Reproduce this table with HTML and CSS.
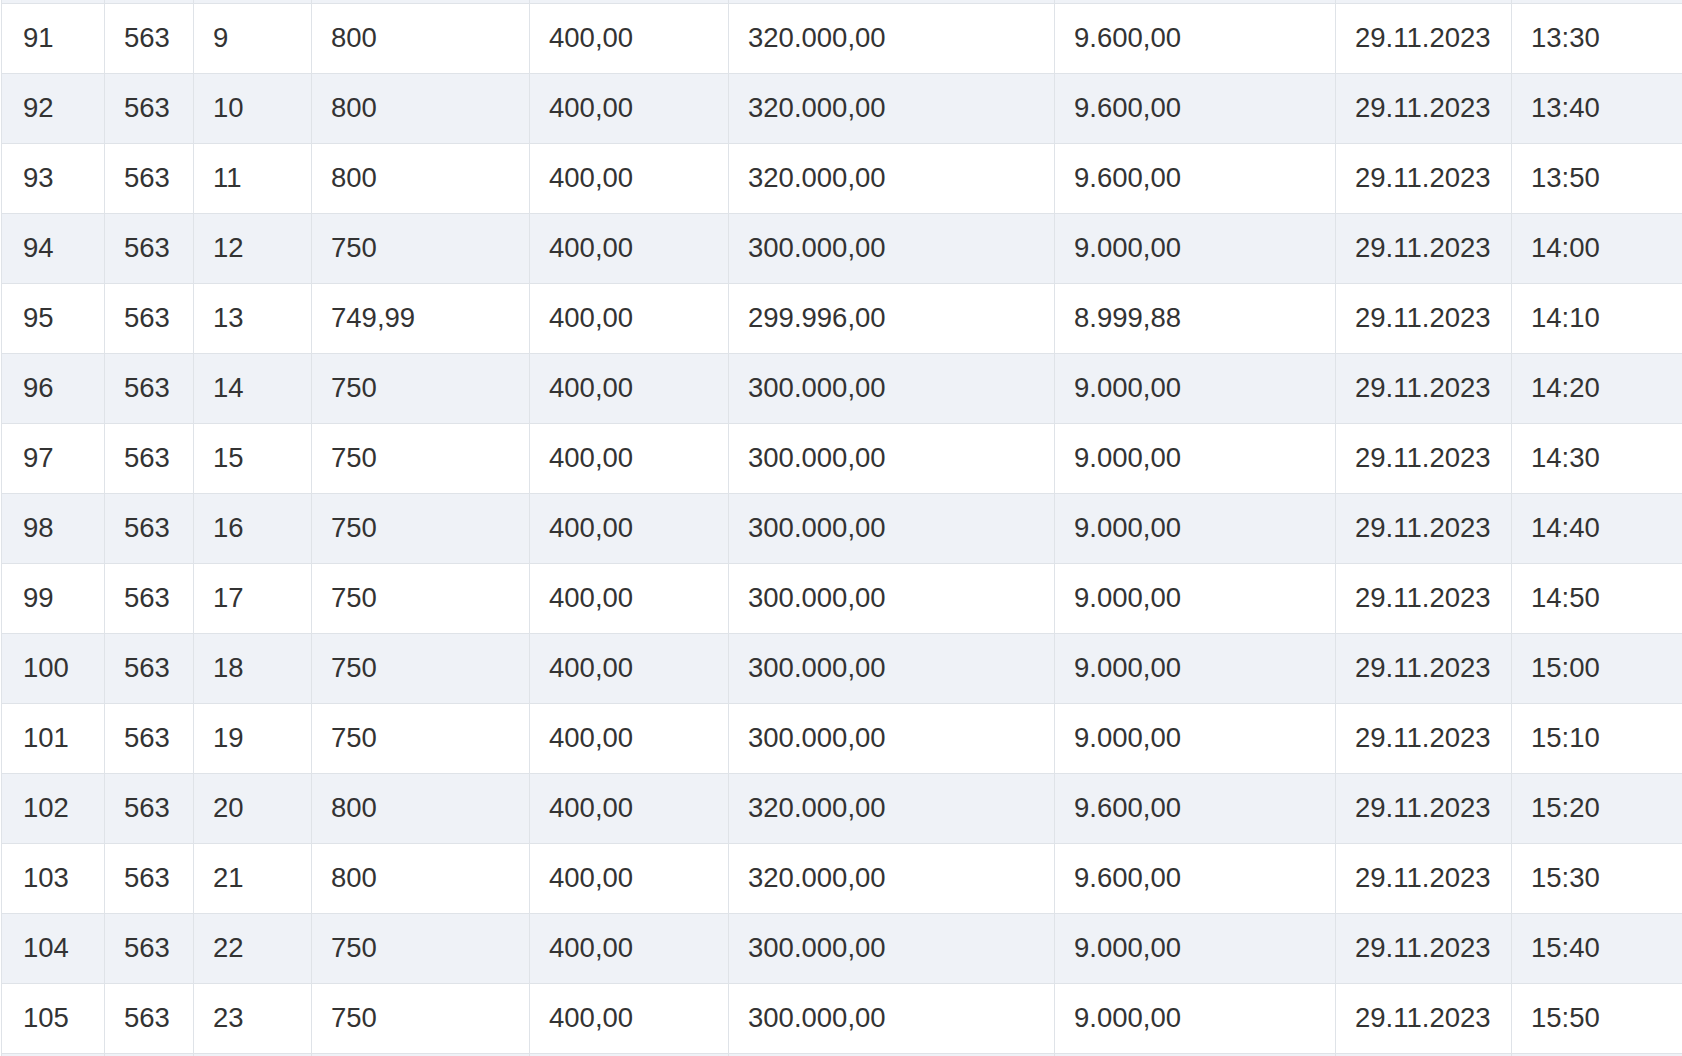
FILE: index.html
```html
<!DOCTYPE html>
<html lang="de">
<head>
<meta charset="utf-8">
<title>Tabelle</title>
<link rel="stylesheet" href="styles.css">
</head>
<body>
<div class="viewport">
<table class="grid">
<colgroup>
<col class="c1"><col class="c2"><col class="c3"><col class="c4"><col class="c5"><col class="c6"><col class="c7"><col class="c8"><col class="c9">
</colgroup>
<tbody>
<tr class="odd edge"><td></td><td></td><td></td><td></td><td></td><td></td><td></td><td></td><td></td></tr>
<tr><td>91</td><td>563</td><td>9</td><td>800</td><td>400,00</td><td>320.000,00</td><td>9.600,00</td><td>29.11.2023</td><td>13:30</td></tr>
<tr class="odd"><td>92</td><td>563</td><td>10</td><td>800</td><td>400,00</td><td>320.000,00</td><td>9.600,00</td><td>29.11.2023</td><td>13:40</td></tr>
<tr><td>93</td><td>563</td><td>11</td><td>800</td><td>400,00</td><td>320.000,00</td><td>9.600,00</td><td>29.11.2023</td><td>13:50</td></tr>
<tr class="odd"><td>94</td><td>563</td><td>12</td><td>750</td><td>400,00</td><td>300.000,00</td><td>9.000,00</td><td>29.11.2023</td><td>14:00</td></tr>
<tr><td>95</td><td>563</td><td>13</td><td>749,99</td><td>400,00</td><td>299.996,00</td><td>8.999,88</td><td>29.11.2023</td><td>14:10</td></tr>
<tr class="odd"><td>96</td><td>563</td><td>14</td><td>750</td><td>400,00</td><td>300.000,00</td><td>9.000,00</td><td>29.11.2023</td><td>14:20</td></tr>
<tr><td>97</td><td>563</td><td>15</td><td>750</td><td>400,00</td><td>300.000,00</td><td>9.000,00</td><td>29.11.2023</td><td>14:30</td></tr>
<tr class="odd"><td>98</td><td>563</td><td>16</td><td>750</td><td>400,00</td><td>300.000,00</td><td>9.000,00</td><td>29.11.2023</td><td>14:40</td></tr>
<tr><td>99</td><td>563</td><td>17</td><td>750</td><td>400,00</td><td>300.000,00</td><td>9.000,00</td><td>29.11.2023</td><td>14:50</td></tr>
<tr class="odd"><td>100</td><td>563</td><td>18</td><td>750</td><td>400,00</td><td>300.000,00</td><td>9.000,00</td><td>29.11.2023</td><td>15:00</td></tr>
<tr><td>101</td><td>563</td><td>19</td><td>750</td><td>400,00</td><td>300.000,00</td><td>9.000,00</td><td>29.11.2023</td><td>15:10</td></tr>
<tr class="odd"><td>102</td><td>563</td><td>20</td><td>800</td><td>400,00</td><td>320.000,00</td><td>9.600,00</td><td>29.11.2023</td><td>15:20</td></tr>
<tr><td>103</td><td>563</td><td>21</td><td>800</td><td>400,00</td><td>320.000,00</td><td>9.600,00</td><td>29.11.2023</td><td>15:30</td></tr>
<tr class="odd"><td>104</td><td>563</td><td>22</td><td>750</td><td>400,00</td><td>300.000,00</td><td>9.000,00</td><td>29.11.2023</td><td>15:40</td></tr>
<tr><td>105</td><td>563</td><td>23</td><td>750</td><td>400,00</td><td>300.000,00</td><td>9.000,00</td><td>29.11.2023</td><td>15:50</td></tr>
<tr class="odd edge"><td></td><td></td><td></td><td></td><td></td><td></td><td></td><td></td><td></td></tr>
</tbody>
</table>
</div>
</body>
</html>
```

FILE: styles.css
```css
html, body {
  margin: 0;
  padding: 0;
  background: #ffffff;
}

.viewport {
  width: 1682px;
  height: 1056px;
  overflow: hidden;
  padding-left: 1px;
  box-sizing: border-box;
}

.grid {
  margin-top: -67px;
  border-collapse: collapse;
  table-layout: fixed;
  width: 1771px;
  font-family: "Liberation Sans", Arial, sans-serif;
  font-size: 27.5px;
  color: #333333;
}

.c1 { width: 103px; }
.c2 { width: 89px; }
.c3 { width: 118px; }
.c4 { width: 218px; }
.c5 { width: 199px; }
.c6 { width: 326px; }
.c7 { width: 281px; }
.c8 { width: 176px; }
.c9 { width: 261px; }

.grid td {
  height: 70px;
  padding: 0 0 2px 19px;
  box-sizing: border-box;
  border: 1px solid #dfe3e8;
  vertical-align: middle;
  white-space: nowrap;
  background: #ffffff;
}

.grid td:first-child {
  padding-left: 21px;
}

.grid tr.odd td {
  background: #eff2f7;
}
```
